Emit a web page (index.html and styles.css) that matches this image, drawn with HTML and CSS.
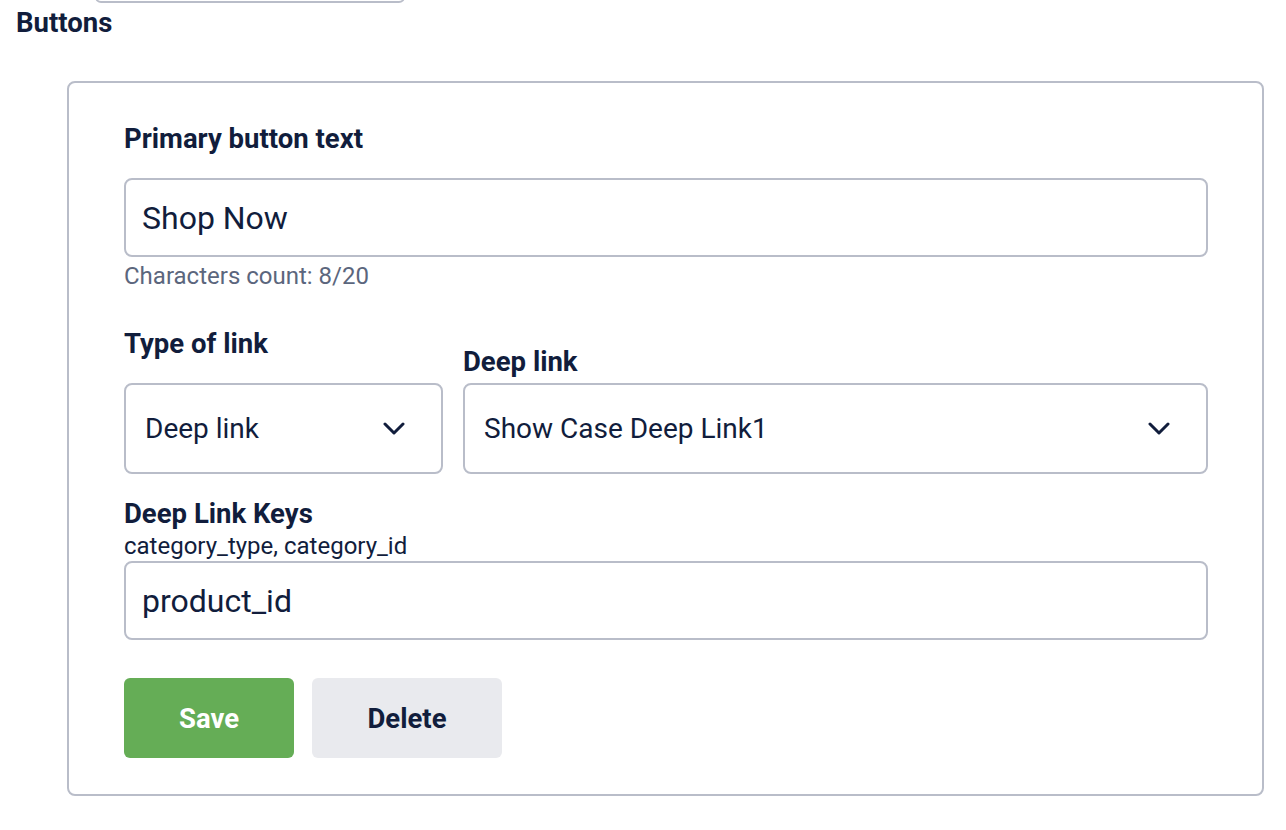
FILE: index.html
```html
<!DOCTYPE html>
<html>
<head>
<meta charset="utf-8">
<link rel="stylesheet" href="styles.css">
</head>
<body>
<div class="top-stub"></div>
<h2 class="section-title">Buttons</h2>
<div class="card">
  <div class="field">
    <label class="label">Primary button text</label>
    <div class="input">Shop Now</div>
    <div class="hint">Characters count: 8/20</div>
  </div>
  <div class="row">
    <div class="col col-type">
      <label class="label">Type of link</label>
      <div class="select">
        <span>Deep link</span>
        <svg class="chev" width="22" height="14" viewBox="0 0 22 14"><path d="M2 2 L11 11 L20 2" fill="none" stroke="#111d3c" stroke-width="3" stroke-linecap="round" stroke-linejoin="round"/></svg>
      </div>
    </div>
    <div class="col col-deep">
      <label class="label">Deep link</label>
      <div class="select">
        <span>Show Case Deep Link1</span>
        <svg class="chev" width="22" height="14" viewBox="0 0 22 14"><path d="M2 2 L11 11 L20 2" fill="none" stroke="#111d3c" stroke-width="3" stroke-linecap="round" stroke-linejoin="round"/></svg>
      </div>
    </div>
  </div>
  <div class="field keys">
    <label class="label">Deep Link Keys</label>
    <div class="sub">category_type, category_id</div>
    <div class="input">product_id</div>
  </div>
  <div class="actions">
    <button class="btn btn-save">Save</button>
    <button class="btn btn-delete">Delete</button>
  </div>
</div>
</body>
</html>
```
FILE: styles.css
```css
* { box-sizing: border-box; }
body {
  margin: 0;
  font-family: Roboto, "Liberation Sans", sans-serif;
  color: #111d3c;
  background: #fff;
}
.top-stub {
  margin: -9px 0 0 95px;
  width: 310px;
  height: 12px;
  border: 2px solid #b9bdc9;
  border-radius: 8px;
}
.section-title {
  margin: 4px 0 0 16px;
  font-size: 27.5px;
  font-weight: 700;
  line-height: 32px;
}
.card {
  margin: 42px 0 0 67px;
  width: 1197px;
  height: 715px;
  border: 2px solid #b9bdc9;
  border-radius: 8px;
  padding: 40px 54px 0 55px;
}
.label {
  display: block;
  font-size: 27.5px;
  font-weight: 700;
  line-height: 32px;
}
.input {
  margin-top: 23px;
  height: 79px;
  border: 2px solid #b9bdc9;
  border-radius: 8px;
  padding: 0 16px;
  display: flex;
  align-items: center;
  font-size: 32px;
}
.hint {
  margin-top: 5px;
  font-size: 24px;
  line-height: 28px;
  color: #5b667d;
}
.row {
  display: flex;
  align-items: flex-end;
  gap: 20px;
  margin-top: 38px;
}
.col-type { width: 319px; }
.col-type .label { margin-bottom: 23px; }
.col-deep { flex: 1; }
.col-deep .label { margin-bottom: 5px; }
.select {
  height: 91px;
  border: 2px solid #b9bdc9;
  border-radius: 8px;
  padding: 0 36px 0 19px;
  display: flex;
  align-items: center;
  justify-content: space-between;
  font-size: 28px;
}
.keys { margin-top: 24px; }
.sub {
  font-size: 24px;
  line-height: 28px;
  margin-top: 2px;
}
.keys .input { margin-top: 1px; height: 79px; }
.actions {
  display: flex;
  gap: 18px;
  margin-top: 38px;
}
.btn {
  height: 80px;
  border: none;
  border-radius: 6px;
  font-family: Roboto, "Liberation Sans", sans-serif;
  font-size: 27.5px;
  font-weight: 700;
}
.btn-save { width: 170px; background: #65ad56; color: #fff; }
.btn-delete { width: 190px; background: #e9eaee; color: #111d3c; }
```
